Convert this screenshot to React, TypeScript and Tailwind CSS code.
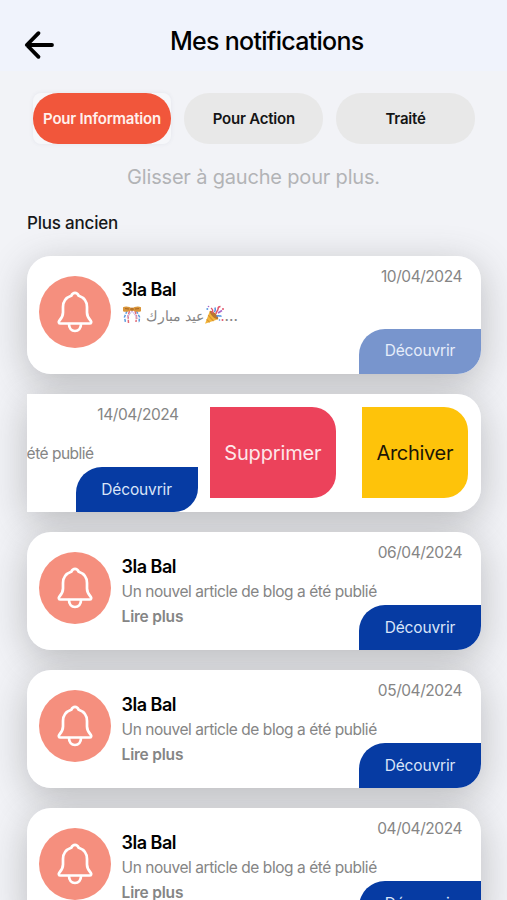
import type { ReactNode } from 'react'

const tabs = [
  { label: 'Pour Information', active: true },
  { label: 'Pour Action', active: false },
  { label: 'Traité', active: false },
]

const articles = [
  { date: '06/04/2024' },
  { date: '05/04/2024' },
  { date: '04/04/2024' },
]

function BackArrow() {
  return (
    <svg width="32" height="30" viewBox="0 0 32 30" fill="none" stroke="#000" strokeWidth="3.8" strokeLinecap="round" strokeLinejoin="round">
      <path d="M29 15H4M15.5 3.2L3.8 15l11.7 11.8" />
    </svg>
  )
}

function Bell() {
  return (
    <svg width="36" height="42" viewBox="0 0 36 42" fill="none" stroke="#fff" strokeWidth="2.7" strokeLinecap="round" strokeLinejoin="round">
      <path d="M14.2 4.8C15.200 2.800 16.300 1.900 18 1.900s2.800.9 3.800 2.900C27 6.700 30 10.700 30 16v5.500c0 3.600 1.200 5.500 3.500 8 1.300 1.500.8 3-1 3h-29c-1.800 0-2.300-1.500-1-3 2.300-2.500 3.500-4.400 3.500-8V16C6 10.700 9 6.700 14.200 4.800z" />
      <path d="M12 33c0 4.500 2.500 7 6 7s6-2.500 6-7" />
    </svg>
  )
}

function ConfettiBall() {
  return (
    <svg width="20" height="20" viewBox="0 0 20 20" fill="none">
      <path d="M5 6L2.500 12l1 5.500M14.500 6l3 6-.5 6" stroke="#5b9be0" strokeWidth="1.500" strokeDasharray="3 1.200" />
      <path d="M7.500 6l-1.500 5 .5 7M13 6l1.500 5-.5 6" stroke="#e36b76" strokeWidth="1.500" strokeDasharray="3.500 1" />
      <path d="M10 6L5 13M10 6l6 8" stroke="#c9b8e8" strokeWidth="1" />
      <path d="M1 2.300C4 .5 8 2 10 3.300 12 2 16 .5 19 2.300v4C16 7.600 12.500 6.300 10 5 7.500 6.300 4 7.600 1 6.300z" fill="#d9963b" />
      <path d="M3 3.600l4 .4M13 4l4-.4" stroke="#a96424" strokeWidth="1" />
      <circle cx="10" cy="4.200" r="1.700" fill="#b8742a" />
    </svg>
  )
}

function PartyPopper() {
  return (
    <svg width="21" height="20" viewBox="0 0 21 20" fill="none">
      <path d="M1 18.800L5.800 6l8.400 8.200z" fill="#f3b63c" />
      <path d="M4.200 10.200l5.300 6M2.600 14.400l3 3" stroke="#d9942f" strokeWidth="1.200" />
      <ellipse cx="10" cy="10" rx="5.700" ry="2" transform="rotate(45 10 10)" fill="#b87532" />
      <path d="M8 8c1.500-2 .5-4-1-5M12 9c0-3 2-3 2-5s1-2.500 2.500-2.500" stroke="#e0566d" strokeWidth="1.500" />
      <path d="M12.500 11.500c2-2 3.500.5 5-.8M10.500 7c1-1.500 1-3 .5-4.500" stroke="#4e8fe0" strokeWidth="1.500" />
      <path d="M14 8l4-2.500" stroke="#a867c9" strokeWidth="1.500" />
      <circle cx="3.300" cy="4" r="1" fill="#5b9be0" />
      <circle cx="19" cy="4" r="1" fill="#e0566d" />
      <circle cx="18.500" cy="15" r="1" fill="#e0566d" />
      <circle cx="4.500" cy="1.500" r=".8" fill="#a867c9" />
      <circle cx="15.500" cy="15" r=".8" fill="#4e8fe0" />
    </svg>
  )
}

function Meta({ date, faded = false }: { date: string; faded?: boolean }) {
  return (
    <div className="flex w-[122px] shrink-0 flex-col items-end justify-between">
      <span className="mt-[9px] mr-[19px] text-[15.5px] leading-6 tracking-[-0.45px] text-[#858585]">{date}</span>
      <button
        className={`h-[45px] w-full rounded-tl-[26px] rounded-br-[24px] text-[15.5px] tracking-[-0.15px] ${
          faded ? 'bg-[#7895cd] text-[#e6edfa]' : 'bg-[#063ba3] text-[#d9e4f8]'
        }`}
      >
        Découvrir
      </button>
    </div>
  )
}

function Card({ date, faded, children }: { date: string; faded?: boolean; children: ReactNode }) {
  return (
    <div className="rounded-[24px] shadow-[0_9px_38px_rgba(70,70,70,0.32)]">
      <div className="relative z-10 flex h-[117.6px] rounded-[24px] bg-white">
        <div className="mt-[19.5px] ml-[12.6px] flex size-[72px] shrink-0 items-center justify-center rounded-full bg-[#f58f7e]">
          <Bell />
        </div>
        <div className="mt-[21.4px] ml-[10.4px] min-w-0 flex-1 whitespace-nowrap">
          <h2 className="text-[18px] leading-[26px] font-semibold tracking-[-0.5px] text-black">3la Bal</h2>
          {children}
        </div>
        <Meta date={date} faded={faded} />
      </div>
    </div>
  )
}

function SwipedCard() {
  return (
    <div className="rounded-r-[24px] shadow-[0_9px_38px_rgba(70,70,70,0.32)]">
      <div className="relative z-10 flex h-[117.6px] overflow-hidden rounded-r-[24px] bg-white">
        <p className="mt-[47.5px] w-[49px] shrink-0 text-[15.5px] leading-6 tracking-[-0.5px] whitespace-nowrap text-[#858585]">été publié</p>
        <Meta date="14/04/2024" />
        <button className="mt-[13px] ml-3 h-[91px] w-[126.5px] shrink-0 rounded-r-[24px] bg-[#ec425b] text-[20px] tracking-[-0.15px] text-[#fde7ea]">
          Supprimer
        </button>
        <button className="mt-[13px] ml-[25.5px] h-[91px] w-[106.5px] shrink-0 rounded-r-[24px] bg-[#fec30a] text-[20px] tracking-[-0.3px] text-[#1c1606]">
          Archiver
        </button>
      </div>
    </div>
  )
}

export default function App() {
  return (
    <main className="h-[900px] w-full overflow-hidden bg-[#f2f3f7] font-['Inter','Noto_Sans',sans-serif]">
      <header className="flex h-[71px] items-start bg-[#f0f3fc] pt-[24px] pl-[23px]">
        <button aria-label="Retour" className="mt-[6px]">
          <BackArrow />
        </button>
        <h1 className="ml-[115px] text-[25px] leading-[34px] font-medium tracking-[-0.72px] whitespace-nowrap text-black">
          Mes notifications
        </h1>
      </header>

      <nav className="mt-[22px] flex gap-[13px] pl-[32.6px]">
        {tabs.map(({ label, active }) => (
          <div key={label} className={active ? 'rounded-lg bg-[#f6f7fa] shadow-[0_0_4px_rgba(60,80,120,0.08)]' : ''}>
            <button
              className={`h-[51px] w-[138.8px] rounded-[25px] pt-px text-[15px] font-semibold tracking-[-0.22px] whitespace-nowrap ${
                active ? 'bg-[#f1563b] text-[#fff0ec]' : 'bg-[#e8e8e8] text-[#151515]'
              }`}
            >
              {label}
            </button>
          </div>
        ))}
      </nav>

      <p className="mt-[17px] text-center text-[20px] leading-8 tracking-[-0.18px] text-[#b2b3b6]">Glisser à gauche pour plus.</p>
      <h3 className="mt-[18px] ml-[27px] text-[17px] leading-6 font-medium tracking-[-0.2px] text-[#17181a]">Plus ancien</h3>

      <section className="mt-[21px] ml-[26.6px] flex w-[454.4px] flex-col gap-[20.5px]">
        <Card date="10/04/2024" faded>
          <div className="flex h-6 items-center text-[15.5px] text-[#858585]">
            <ConfettiBall />
            <span dir="rtl" lang="ar" className="ml-[4px] text-[14px]">عيد مبارك</span>
            <PartyPopper />
            <span>...</span>
          </div>
        </Card>
        <SwipedCard />
        {articles.map(({ date }) => (
          <Card key={date} date={date}>
            <p className="text-[15.5px] leading-6 tracking-[-0.45px] text-[#858585]">Un nouvel article de blog a été publié</p>
            <p className="text-[15.5px] leading-[25px] font-semibold tracking-[-0.2px] text-[#858585]">Lire plus</p>
          </Card>
        ))}
      </section>
    </main>
  )
}
